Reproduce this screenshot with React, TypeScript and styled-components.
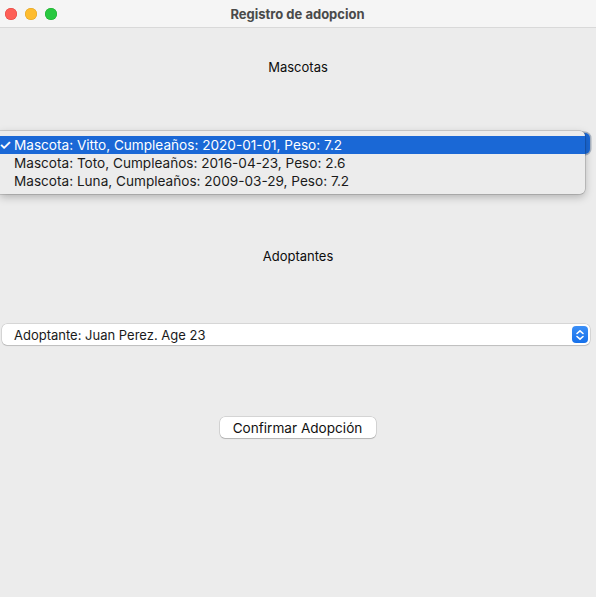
import React from "react";
import styled, { createGlobalStyle } from "styled-components";

const Global = createGlobalStyle`
  html, body { margin: 0; padding: 0; background: #ececec; }
  body { font-family: "Inter", "Liberation Sans", sans-serif; -webkit-font-smoothing: antialiased; }
`;

const Window = styled.div`
  width: 596px;
  height: 597px;
  display: flex;
  flex-direction: column;
  background: #ececec;
  overflow: hidden;
`;

const TitleBar = styled.div`
  height: 27px;
  flex: none;
  display: flex;
  align-items: center;
  background: #f5f5f5;
  border-bottom: 1px solid #d9d9d9;
`;

const Lights = styled.div`
  display: flex;
  gap: 8px;
  padding-left: 5px;
`;

const Light = styled.span<{ $c: string; $b: string }>`
  width: 12px;
  height: 12px;
  border-radius: 50%;
  background: ${(p) => p.$c};
  box-shadow: inset 0 0 0 0.5px ${(p) => p.$b};
`;

const Title = styled.div`
  flex: 1;
  text-align: center;
  font-size: 13px;
  font-weight: 700;
  color: #4a4a4a;
  margin-right: 58px;
`;

const Content = styled.div`
  flex: 1;
  display: flex;
  flex-direction: column;
  align-items: stretch;
  padding-top: 31px;
`;

const Label = styled.div<{ $mt?: number }>`
  height: 16px;
  line-height: 16px;
  text-align: center;
  font-size: 13px;
  color: #0d0d0d;
  margin-top: ${(p) => p.$mt ?? 0}px;
`;

const Combo = styled.div<{ $mt: number; $open?: boolean }>`
  position: relative;
  margin: ${(p) => p.$mt}px 6px 0 2px;
  height: 21px;
  background: ${(p) => (p.$open ? "#1a68d6" : "#fff")};
  border-radius: 5px;
  box-shadow: ${(p) =>
    p.$open
      ? "0 0 0 1.5px #a9b3c0, 0 1px 1px rgba(0,0,0,0.15)"
      : "0 0 0 0.5px rgba(0, 0, 0, 0.18), 0 1px 1px rgba(0, 0, 0, 0.12)"};
  display: flex;
  align-items: center;
  padding-left: 12px;
  font-size: 13px;
  color: #1a1a1a;
`;

const ComboText = styled.span`
  flex: 1;
`;

const Stepper = styled.div`
  width: 16px;
  height: 17px;
  margin-right: 2px;
  border-radius: 4px;
  background: linear-gradient(#3b8ff7, #1670ea);
  display: flex;
  align-items: center;
  justify-content: center;
`;

const Popup = styled.div`
  position: absolute;
  left: -2px;
  top: -2px;
  width: 585px;
  padding: 5px 0 4px;
  background: #ececec;
  border-radius: 0 5px 5px 0;
  box-shadow: 0 0 0 0.5px rgba(0, 0, 0, 0.25), 0 3px 8px rgba(0, 0, 0, 0.25);
  display: flex;
  flex-direction: column;
`;

const Item = styled.div<{ $sel?: boolean }>`
  position: relative;
  height: 18px;
  line-height: 18px;
  padding-left: 14px;
  font-size: 13.6px;
  color: ${(p) => (p.$sel ? "#fff" : "#1a1a1a")};
  background: ${(p) => (p.$sel ? "#1a68d6" : "transparent")};
`;

const Check = styled.span`
  position: absolute;
  left: -1px;
  top: 0;
  font-size: 14px;
  font-weight: 600;
`;

const Button = styled.button`
  align-self: center;
  margin-top: 72px;
  width: 156px;
  height: 21px;
  border: none;
  border-radius: 5px;
  background: #fff;
  box-shadow: 0 0 0 0.5px rgba(0, 0, 0, 0.2), 0 1px 1px rgba(0, 0, 0, 0.15);
  font-family: inherit;
  font-size: 13.6px;
  color: #111;
  padding: 0;
  margin-right: 1px;
`;

const Arrows = () => (
  <svg width="10" height="12" viewBox="0 0 10 12" fill="none" stroke="#fff" strokeWidth="1.6" strokeLinecap="round" strokeLinejoin="round">
    <path d="M2 4.5 L5 1.8 L8 4.5" />
    <path d="M2 7.5 L5 10.2 L8 7.5" />
  </svg>
);

const mascotas = [
  "Mascota: Vitto, Cumpleaños: 2020-01-01, Peso: 7.2",
  "Mascota: Toto, Cumpleaños: 2016-04-23, Peso: 2.6",
  "Mascota: Luna, Cumpleaños: 2009-03-29, Peso: 7.2",
];

export default function App() {
  return (
    <>
      <Global />
      <Window>
        <TitleBar>
          <Lights>
            <Light $c="#fe5f57" $b="#e0443e" />
            <Light $c="#febc2e" $b="#dea123" />
            <Light $c="#28c840" $b="#1aab29" />
          </Lights>
          <Title>Registro de adopcion</Title>
        </TitleBar>
        <Content>
          <Label>Mascotas</Label>
          <Combo $mt={58} $open>
            <Popup>
              {mascotas.map((m, i) => (
                <Item key={m} $sel={i === 0}>
                  {i === 0 && <Check>✓</Check>}
                  {m}
                </Item>
              ))}
            </Popup>
          </Combo>
          <Label $mt={94}>Adoptantes</Label>
          <Combo $mt={60}>
            <ComboText>Adoptante: Juan Perez. Age 23</ComboText>
            <Stepper>
              <Arrows />
            </Stepper>
          </Combo>
          <Button>Confirmar Adopción</Button>
        </Content>
      </Window>
    </>
  );
}
